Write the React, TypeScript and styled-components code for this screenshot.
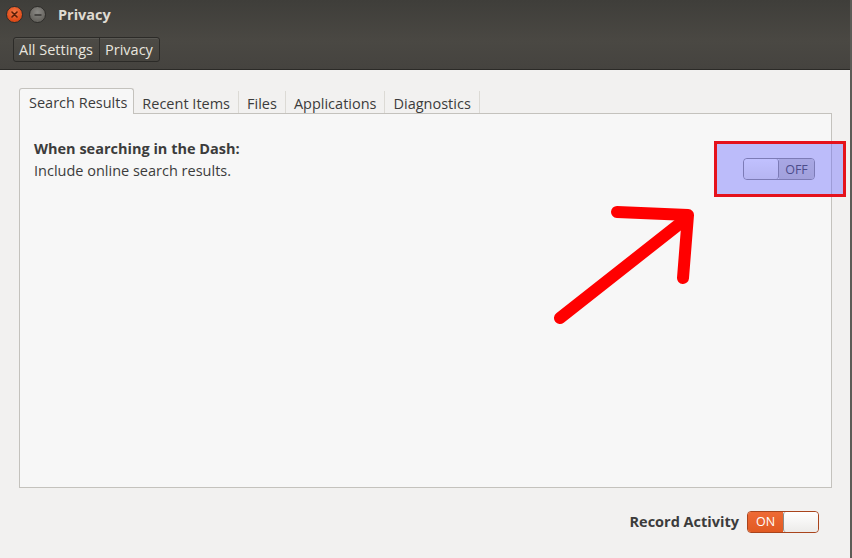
import React from "react";
import styled, { createGlobalStyle } from "styled-components";

const GlobalStyle = createGlobalStyle`
  html, body {
    margin: 0;
    padding: 0;
    background: #3c3b37;
  }
  * {
    box-sizing: border-box;
  }
`;

const Window = styled.div`
  position: relative;
  width: 852px;
  height: 558px;
  display: flex;
  flex-direction: column;
  font-family: "Open Sans", "DejaVu Sans", sans-serif;
  background: #f2f1f0;
  overflow: hidden;
  border-right: 2px solid #5d5b56;
`;

const Header = styled.div`
  height: 71px;
  display: flex;
  flex-direction: column;
  background: linear-gradient(#3f3e3a, #4a4843 60%, #45433f);
  border-bottom: 1px solid #2b2a27;
`;

const TitleRow = styled.div`
  height: 29px;
  display: flex;
  align-items: center;
  padding-left: 6px;
  gap: 6px;
`;

const WinButton = styled.div<{ kind: "close" | "min" }>`
  width: 17px;
  height: 17px;
  border-radius: 50%;
  display: flex;
  align-items: center;
  justify-content: center;
  background: ${(p) =>
    p.kind === "close"
      ? "radial-gradient(circle at 50% 35%, #f57a48, #de4a17 70%)"
      : "radial-gradient(circle at 50% 35%, #8b8a86, #66645f 70%)"};
  border: 1px solid #2e2d2a;
`;

const Title = styled.div`
  margin-left: 6px;
  color: #dfdbd2;
  font-weight: 700;
  font-size: 14.5px;
`;

const Toolbar = styled.div`
  flex: 1;
  display: flex;
  align-items: flex-start;
  padding: 8px 0 0 13px;
`;

const Breadcrumbs = styled.div`
  display: flex;
  height: 25px;
  border: 1px solid #2c2b28;
  border-radius: 3px;
  background: linear-gradient(#4d4b46, #46443f);
  box-shadow: inset 0 1px 0 rgba(255, 255, 255, 0.08);
`;

const Crumb = styled.div`
  display: flex;
  align-items: center;
  padding: 0 6px 0 5px;
  color: #e8e5df;
  font-size: 14.5px;
  & + & {
    border-left: 1px solid #2f2e2b;
  }
`;

const Body = styled.div`
  flex: 1;
  display: flex;
  flex-direction: column;
  padding: 18px 18px 0 19px;
`;

const TabStrip = styled.div`
  display: flex;
  align-items: flex-end;
  height: 26px;
  border-bottom: 1px solid #c4c2bd;
`;

const Tab = styled.div<{ active?: boolean }>`
  height: ${(p) => (p.active ? "26px" : "22px")};
  display: flex;
  align-items: center;
  padding: ${(p) => (p.active ? "1px 6px 0 9px" : "2px 8px 0")};
  font-size: 14.5px;
  color: #3c3c3c;
  background: ${(p) => (p.active ? "#f7f7f7" : "transparent")};
  border: ${(p) => (p.active ? "1px solid #c4c2bd" : "none")};
  border-bottom: none;
  border-radius: ${(p) => (p.active ? "3px 3px 0 0" : "0")};
  margin-bottom: ${(p) => (p.active ? "-1px" : "0")};
  border-right: ${(p) => (p.active ? "1px solid #c4c2bd" : "1px solid #dcdad5")};
`;

const Panel = styled.div`
  height: 374px;
  background: #f7f7f7;
  border: 1px solid #c4c2bd;
  border-top: none;
  display: flex;
  justify-content: space-between;
  padding: 24px 16px 0 14px;
`;

const Setting = styled.div`
  display: flex;
  flex-direction: column;
  color: #3c3c3c;
  font-size: 14.5px;
  line-height: 22px;
`;

const SettingTitle = styled.div`
  font-weight: 700;
`;

const SwitchBox = styled.div<{ on?: boolean }>`
  width: 72px;
  height: 22px;
  display: flex;
  border-radius: 4px;
  overflow: hidden;
  border: 1px solid ${(p) => (p.on ? "#a9441c" : "#8c8a86")};
  flex-direction: ${(p) => (p.on ? "row" : "row-reverse")};
`;

const SwitchLabel = styled.div<{ on?: boolean }>`
  flex: 1;
  display: flex;
  align-items: center;
  justify-content: center;
  font-size: 12.5px;
  color: ${(p) => (p.on ? "#ffffff" : "#3c3c3c")};
  background: ${(p) => (p.on ? "linear-gradient(#ee6a35, #e15a22)" : "linear-gradient(#d6d5d2, #cbc9c5)")};
`;

const Knob = styled.div<{ on?: boolean }>`
  width: 35px;
  background: linear-gradient(#ffffff, #ecebe9);
  border-${(p) => (p.on ? "left" : "right")}: 1px solid #8c8a86;
  border-radius: 3px;
`;

const SearchSwitchSlot = styled.div`
  margin-top: 20px;
`;

const Footer = styled.div`
  height: 70px;
  display: flex;
  align-items: center;
  justify-content: flex-end;
  gap: 8px;
  padding-right: 13px;
  padding-bottom: 3px;
`;

const FooterLabel = styled.div`
  font-weight: 700;
  font-size: 14.5px;
  color: #3c3c3c;
`;

const Highlight = styled.div`
  position: absolute;
  left: 714px;
  top: 141px;
  width: 132px;
  height: 56px;
  border: 3px solid #e5121c;
  background: rgba(100, 100, 255, 0.4);
`;

const ArrowSvg = styled.svg`
  position: absolute;
  left: 545px;
  top: 200px;
  width: 160px;
  height: 130px;
`;

const Switch = ({ on }: { on?: boolean }) => (
  <SwitchBox on={on}>
    <SwitchLabel on={on}>{on ? "ON" : "OFF"}</SwitchLabel>
    <Knob on={on} />
  </SwitchBox>
);

export default function App() {
  return (
    <>
      <GlobalStyle />
      <Window>
        <Header>
          <TitleRow>
            <WinButton kind="close">
              <svg width="7" height="7" viewBox="0 0 7 7">
                <path d="M1 1L6 6M6 1L1 6" stroke="#5a1f08" strokeWidth="1.6" strokeLinecap="round" />
              </svg>
            </WinButton>
            <WinButton kind="min">
              <svg width="8" height="2" viewBox="0 0 8 2">
                <path d="M0.5 1H7.5" stroke="#3a3936" strokeWidth="1.6" />
              </svg>
            </WinButton>
            <Title>Privacy</Title>
          </TitleRow>
          <Toolbar>
            <Breadcrumbs>
              <Crumb>All Settings</Crumb>
              <Crumb>Privacy</Crumb>
            </Breadcrumbs>
          </Toolbar>
        </Header>
        <Body>
          <TabStrip>
            <Tab active>Search Results</Tab>
            <Tab>Recent Items</Tab>
            <Tab>Files</Tab>
            <Tab>Applications</Tab>
            <Tab>Diagnostics</Tab>
          </TabStrip>
          <Panel>
            <Setting>
              <SettingTitle>When searching in the Dash:</SettingTitle>
              <div>Include online search results.</div>
            </Setting>
            <SearchSwitchSlot>
              <Switch />
            </SearchSwitchSlot>
          </Panel>
          <Footer>
            <FooterLabel>Record Activity</FooterLabel>
            <Switch on />
          </Footer>
        </Body>
        <Highlight />
        <ArrowSvg viewBox="0 0 160 130">
          <g stroke="#ff0000" strokeWidth="12" strokeLinecap="round" strokeLinejoin="round" fill="none">
            <path d="M15 118L142 18" />
            <path d="M72 12L143 15L138 78" />
          </g>
        </ArrowSvg>
      </Window>
    </>
  );
}
